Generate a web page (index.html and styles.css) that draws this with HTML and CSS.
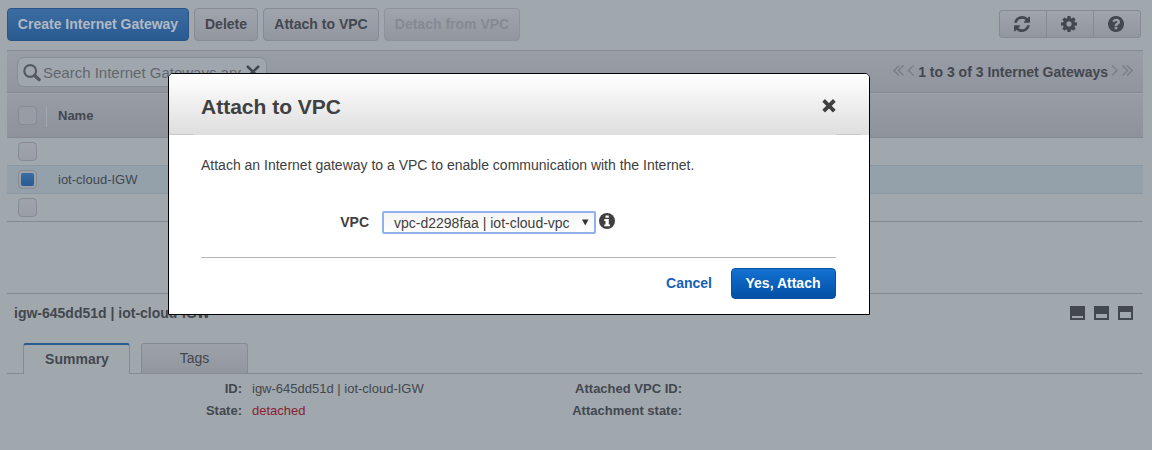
FILE: index.html
```html
<!DOCTYPE html>
<html lang="en">
<head>
<meta charset="utf-8">
<title>Internet Gateways</title>
<link rel="stylesheet" href="styles.css">
</head>
<body>
<main class="console">
  <header class="toolbar">
    <button class="btn btn-primary"><span>Create Internet Gateway</span></button>
    <button class="btn btn-delete"><span>Delete</span></button>
    <button class="btn btn-attach"><span>Attach to VPC</span></button>
    <button class="btn btn-detach"><span>Detach from VPC</span></button>
    <div class="tools">
      <button class="tool" aria-label="Refresh"><svg width="16" height="16" viewBox="0 0 1536 1536"><path fill="currentColor" d="M1511 928q0 5-1 7-64 268-268 434.500T764 1536q-146 0-282.500-55T238 1324l-129 129q-19 19-45 19t-45-19-19-45V960q0-26 19-45t45-19h448q26 0 45 19t19 45-19 45l-137 137q71 66 161 102t187 36q134 0 250-65t186-179q11-17 53-117 8-23 30-23h192q13 0 22.500 9.500t9.500 22.500zm25-800v448q0 26-19 45t-45 19h-448q-26 0-45-19t-19-45 19-45l138-138Q969 256 768 256q-134 0-250 65T332 500q-11 17-53 117-8 23-30 23H50q-13 0-22.500-9.500T18 608v-7q65-268 270-434.500T768 0q146 0 284 55.500T1297 212l130-129q19-19 45-19t45 19 19 45z"/></svg></button>
      <button class="tool" aria-label="Settings"><svg width="16" height="16" viewBox="0 0 1536 1536"><path fill="currentColor" fill-rule="evenodd" d="M1024 768q0-106-75-181t-181-75-181 75-75 181 75 181 181 75 181-75 75-181zm512-109v222q0 12-8 23t-20 13l-185 28q-19 54-39 91 35 50 107 138 10 12 10 25t-9 23q-27 37-99 108t-94 71q-12 0-26-9l-138-108q-44 23-91 38-16 136-29 186-7 28-36 28H657q-14 0-24.500-8.500T621 1506l-28-184q-49-16-90-37l-141 107q-10 9-25 9-14 0-25-11-126-114-165-168-7-10-7-23 0-12 8-23 15-21 51-66.500t54-70.500q-27-50-41-99L29 913q-13-2-21-12.500T0 877V655q0-12 8-23t19-13l186-28q14-46 39-92-40-57-107-138-10-12-10-24 0-10 9-23 26-36 98.500-107.500T337 135q13 0 26 10l138 107q44-23 91-38 16-136 29-186 7-28 36-28h222q14 0 24.500 8.500T915 30l28 184q49 16 90 37l142-107q9-9 24-9 13 0 25 10 129 119 165 170 7 8 7 22 0 12-8 23-15 21-51 66.500t-54 70.500q26 50 41 98l183 28q13 2 21 12.500t8 23.500z"/></svg></button>
      <button class="tool" aria-label="Help"><svg width="16" height="16" viewBox="0 0 1536 1536"><path fill="currentColor" fill-rule="evenodd" d="M896 1248v-192q0-14-9-23t-23-9H672q-14 0-23 9t-9 23v192q0 14 9 23t23 9h192q14 0 23-9t9-23zm256-672q0-88-55.500-163T958 297t-170-41q-243 0-371 213-15 24 8 42l132 100q7 6 19 6 16 0 25-12 53-68 86-92 34-24 86-24 48 0 85.500 26t37.500 59q0 38-20 61t-68 45q-63 28-115.500 86.500T640 892v36q0 14 9 23t23 9h192q14 0 23-9t9-23q0-19 21.500-49.500T972 829q32-18 49-28.500t46-35 44.500-48 28-60.500 12.500-81zm384 192q0 209-103 385.500T1153.500 1433 768 1536t-385.500-103T103 1153.500 0 768t103-385.500T382.500 103 768 0t385.500 103T1433 382.500 1536 768z"/></svg></button>
    </div>
  </header>

  <section class="filter">
    <label class="search">
      <svg class="magnifier" width="18" height="18" viewBox="0 0 18 18"><circle cx="7.2" cy="7" r="5.9" fill="none" stroke="currentColor" stroke-width="2.1"/><path d="M11.500 11.500L16 15.500" stroke="currentColor" stroke-width="3.400" stroke-linecap="round"/></svg>
      <span class="placeholder">Search Internet Gateways and</span>
      <svg class="clear" width="16" height="14" viewBox="0 0 16 14"><path d="M2 1L14 12.500M14 1L2 12.500" stroke="currentColor" stroke-width="2.500"/></svg>
    </label>
    <nav class="pager">
      <svg width="22" height="14" viewBox="0 0 22 14"><path d="M6 1.500L1 6.500L6 11.500M10.500 1.500L5.500 6.500L10.500 11.500M20.500 1.500L15.500 6.500L20.500 11.500" fill="none" stroke="currentColor" stroke-width="1.600"/></svg>
      <span class="pager-text">1 to 3 of 3 Internet Gateways</span>
      <svg width="22" height="14" viewBox="0 0 22 14"><path d="M1 1.500L6 6.500L1 11.500M11.500 1.500L16.500 6.500L11.500 11.500M16 1.500L21 6.500L16 11.500" fill="none" stroke="currentColor" stroke-width="1.600"/></svg>
    </nav>
  </section>

  <section class="grid">
    <div class="grid-head"><i class="check"></i><i class="divider"></i><b>Name</b></div>
    <div class="row"><i class="check"></i></div>
    <div class="row row-selected"><i class="check checked"></i><span class="row-name">iot-cloud-IGW</span></div>
    <div class="row row-last"><i class="check"></i></div>
  </section>

  <section class="details">
    <div class="details-head">
      <b class="details-title">igw-645dd51d | iot-cloud-IGW</b>
      <div class="panes"><i class="pane pane-low"></i><i class="pane pane-mid"></i><i class="pane pane-high"></i></div>
    </div>
    <div class="tabs">
      <div class="tab tab-active"><span>Summary</span></div>
      <div class="tab"><span>Tags</span></div>
    </div>
    <dl class="facts">
      <dt>ID:</dt><dd>igw-645dd51d | iot-cloud-IGW</dd><dt>Attached VPC ID:</dt>
      <dt>State:</dt><dd class="detached">detached</dd><dt>Attachment state:</dt>
    </dl>
  </section>
</main>

<div class="dialog" role="dialog" aria-labelledby="dialog-title">
  <div class="dialog-head">
    <h1 id="dialog-title">Attach to VPC</h1>
    <svg class="close" width="14" height="14" viewBox="0 0 14 14"><path d="M3 2.800L11 10.800M11 2.800L3 10.800" stroke="currentColor" stroke-width="3.800" stroke-linecap="square"/></svg>
  </div>
  <div class="dialog-body">
    <p class="intro">Attach an Internet gateway to a VPC to enable communication with the Internet.</p>
    <div class="field">
      <b class="field-label">VPC</b>
      <div class="select"><span>vpc-d2298faa | iot-cloud-vpc</span><svg width="7" height="7" viewBox="0 0 7 7"><path d="M0 0.500H6.500L3.250 6.500Z" fill="#333"/></svg></div>
      <svg class="info" width="16" height="16" viewBox="0 0 16 16"><circle cx="8" cy="8" r="8" fill="#404040"/><path d="M6.500 2.400H9.800V4.700H6.500ZM5.300 6H9.800V11.400H11V13.300H5.300V11.400H6.500V7.900H5.300Z" fill="#fff"/></svg>
    </div>
    <div class="actions">
      <a class="cancel">Cancel</a>
      <button class="confirm"><span>Yes, Attach</span></button>
    </div>
  </div>
</div>
</body>
</html>
```
FILE: styles.css
```css
* { box-sizing: border-box; }

body {
  margin: 0;
  height: 450px;
  overflow: hidden;
  background: #a0a7ad;
  color: #43474f;
  font: 14px/18px "Liberation Sans", Arial, sans-serif;
}

button { font: inherit; color: inherit; margin: 0; padding: 0; }

span, b, dt, dd, a { white-space: nowrap; }

.console { padding: 8px 9px 0 7px; }

.toolbar { display: flex; height: 42px; gap: 5px; }

.btn {
  display: flex;
  justify-content: center;
  align-items: center;
  height: 33px;
  padding-bottom: 1px;
  border: 1px solid #878b94;
  border-radius: 4px;
  background: linear-gradient(#a0a5ad, #92969f);
  font-weight: bold;
}

.btn-primary {
  width: 182px;
  border-color: #285387;
  background: linear-gradient(#3b6da2, #295b92);
  color: #b2b9c2;
}

.btn-delete { width: 64px; }
.btn-attach { width: 116px; }
.btn-detach { width: 136px; color: #858a92; border-color: #8e939b; }

.tools {
  display: flex;
  width: 142px;
  height: 28px;
  margin: 2px 2px 0 auto;
  border: 1px solid #858a93;
  border-radius: 3px;
  background: linear-gradient(#a0a5ad, #92969f);
}

.tool {
  display: flex;
  flex: 1;
  align-items: center;
  justify-content: center;
  padding-right: 2px;
  border: 0;
  background: none;
}

.tool + .tool { border-left: 1px solid #858a93; }

.filter {
  display: flex;
  justify-content: space-between;
  height: 43px;
  padding: 6px 10px;
  border-top: 1px solid #868a93;
  border-bottom: 1px solid #858992;
  background: linear-gradient(#999da5, #91959e);
}

.search {
  display: flex;
  width: 250px;
  height: 30px;
  padding: 6px 0 0 5px;
  border: 1px solid #888d96;
  border-radius: 7px;
  background: #a0a6ad;
}

.magnifier { color: #555960; flex: none; }

.placeholder {
  width: 198px;
  margin-left: 2px;
  overflow: hidden;
  color: #62676e;
  font-size: 15px;
}

.clear { margin: 1px 0 0 4px; flex: none; }

.pager {
  display: flex;
  gap: 3px;
  padding-top: 6px;
  font-weight: bold;
}

.pager svg { color: #7c8189; margin-top: 1px; }

.grid-head {
  display: flex;
  height: 45px;
  padding: 13px 0 0 11px;
  border-top: 1px solid #a0a4ac;
  border-bottom: 1px solid #858992;
  background: linear-gradient(#989ca5, #8e929b);
}

.grid-head .check { margin-top: -1px; background: #989ca4; }
.grid-head b { margin-left: 11px; font-size: 13px; }
.divider { width: 1px; height: 20px; margin-left: 9px; background: #a5a8af; }

.check {
  width: 19px;
  height: 19px;
  border: 1px solid #878b94;
  border-radius: 4px;
  background: linear-gradient(#a0a3ab, #999da5);
}

.row {
  display: flex;
  height: 28px;
  padding: 4px 11px 0;
  border-bottom: 1px solid #8d979f;
}

.row-selected { background: #94a1ab; }
.row-last { border-color: #868a93; }
.row-name { margin-left: 21px; padding-top: 1px; font-size: 13px; }

.checked { padding: 2px; }
.checked::before {
  display: block;
  width: 13px;
  height: 13px;
  border-radius: 2px;
  background: linear-gradient(#3a6da3, #295b92);
  content: "";
}

.details { margin-top: 71px; border-top: 1px solid #868a93; }
.details-head { display: flex; justify-content: space-between; height: 49px; padding: 10px 10px 0 7px; }
.panes { display: flex; gap: 9px; margin-top: 2px; }

.pane { width: 15px; height: 14px; border: 2px solid #43474f; }
.pane-low { border-top-width: 10px; }
.pane-mid { border-top-width: 8px; }
.pane-high { border-top-width: 6px; }

.tabs {
  display: flex;
  gap: 11px;
  height: 31px;
  padding-left: 16px;
  box-shadow: inset 0 -1px #868a93;
}

.tab {
  width: 107px;
  height: 30px;
  padding-top: 5px;
  border: 1px solid #868a93;
  border-bottom: 0;
  border-radius: 3px 3px 0 0;
  background: linear-gradient(#9da1a9, #92969f);
  text-align: center;
}

.tab-active {
  height: 31px;
  padding-left: 1px;
  border-top: 2px solid #285b93;
  background: #a0a7ad;
  font-weight: bold;
}

.facts {
  display: grid;
  grid-template-columns: 235px 300px 140px;
  grid-auto-rows: 22px;
  margin: 0;
  padding-top: 6px;
  font-size: 13px;
}

dt { font-weight: bold; text-align: right; }
dd { margin: 0 0 0 10px; }
.detached { color: #8b1d30; }

.dialog {
  position: absolute;
  top: 73px;
  left: 168px;
  width: 702px;
  height: 242px;
  border: 1px solid #000;
  border-radius: 5px 5px 0 0;
  overflow: hidden;
  background: #fff;
  color: #404040;
}

.dialog-head {
  display: flex;
  justify-content: space-between;
  height: 61px;
  padding: 20px 33px 0 32px;
  background:
    linear-gradient(#c8c8c8, #c8c8c8) 0 100% / 25px 1px no-repeat,
    linear-gradient(#c8c8c8, #c8c8c8) 667px 100% / 25px 1px no-repeat,
    linear-gradient(#fff, #dedede);
}

h1 { margin: 0; font-size: 21px; line-height: 25px; }
.close { margin-top: 5px; }

.dialog-body { padding: 21px 33px 0 32px; }
.intro { margin: 0; white-space: nowrap; }

.field { display: flex; height: 84px; padding-top: 37px; border-bottom: 1px solid #b5b5b5; }
.field-label { width: 168px; padding-top: 2px; text-align: right; }

.select {
  display: flex;
  width: 214px;
  height: 23px;
  margin-left: 13px;
  padding: 1px 5px 0 10px;
  justify-content: space-between;
  border: 2px solid #8fb1ed;
  border-radius: 2px;
  background: linear-gradient(#f5f5f5, #fff);
}

.select svg { margin-top: 5px; }
.info { margin: 2px 0 0 3px; }

.actions { display: flex; justify-content: flex-end; padding-top: 10px; gap: 19px; font-weight: bold; }
.cancel { padding-top: 6px; color: #1660b8; }

.confirm {
  width: 105px;
  height: 31px;
  padding: 0 1px 1px 0;
  border: 1px solid #0b50a0;
  border-radius: 4px;
  background: linear-gradient(#1372d2, #034fa5);
  color: #fff;
}
```
